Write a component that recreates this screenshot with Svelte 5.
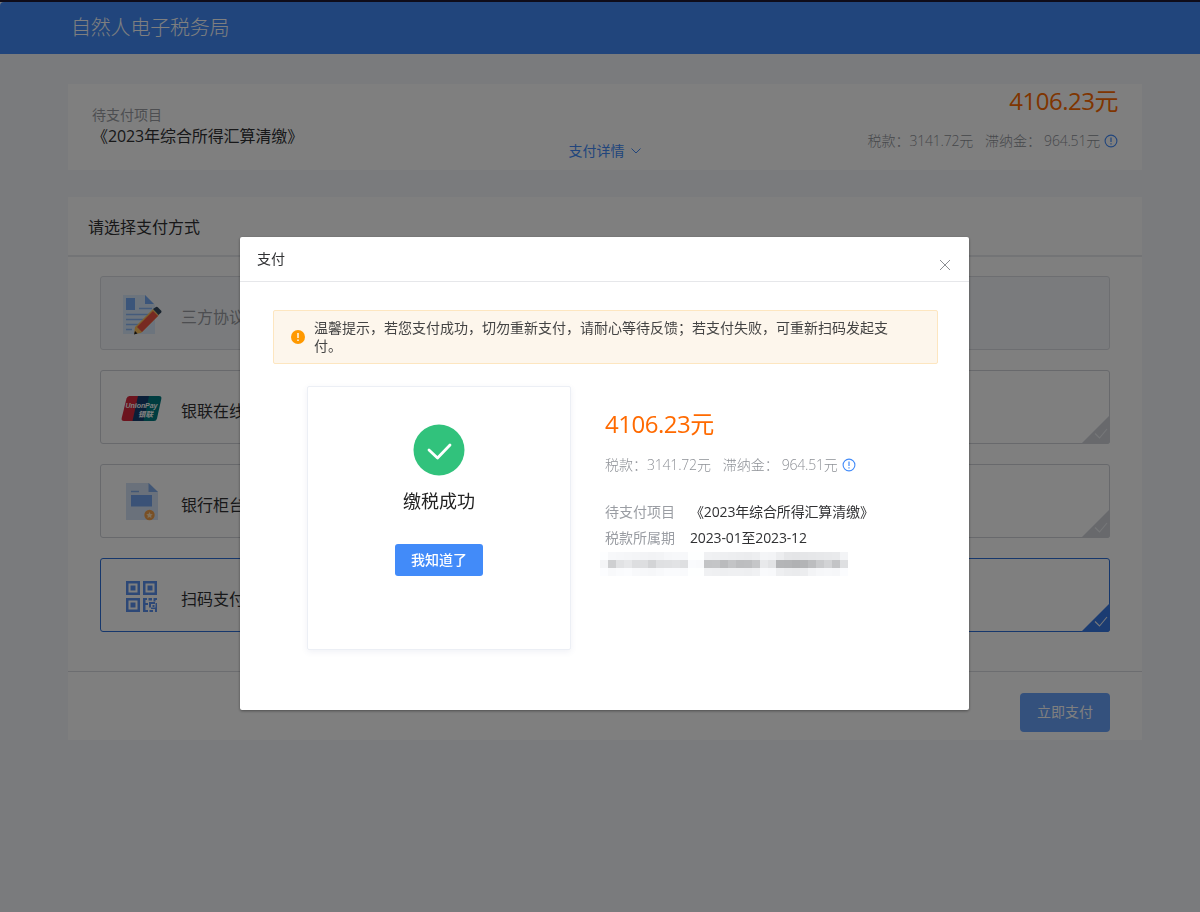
<script>
  const project = '《2023年综合所得汇算清缴》';
  const total = '4106.23元';

  const methods = [
    { id: 'agreement', label: '三方协议', disabled: true },
    { id: 'unionpay', label: '银联在线' },
    { id: 'counter', label: '银行柜台' },
    { id: 'qrcode', label: '扫码支付' },
  ];

  let selected = $state('qrcode');

  // grey level of each 8px block, one list per row
  const mosaic = [
    [253, 247, 246, 245, 244, 243, 242, 243, 246, 247, 247, 254, 254, 240, 239, 238, 237, 236, 235, 237, 244, 243, 236, 229, 228, 229, 230, 231, 232, 233, 243],
    [244, 206, 225, 230, 221, 221, 211, 223, 224, 226, 222, 250, 249, 195, 196, 186, 195, 188, 189, 197, 232, 226, 180, 179, 176, 179, 188, 201, 210, 195, 222],
    [252, 248, 250, 251, 248, 247, 246, 248, 250, 250, 249, 254, 254, 240, 239, 238, 239, 239, 238, 240, 249, 248, 238, 235, 234, 236, 243, 246, 247, 246, 251],
  ];
  const tint = (v) => `rgb(${v}, ${Math.min(255, v + 1)}, ${Math.min(255, v + 3)})`;
</script>

{#snippet info()}
  <svg class="info" viewBox="0 0 14 14" fill="none" stroke="#428bf9">
    <circle cx="7" cy="7" r="5.9" stroke-width="1.1" />
    <path d="M7 3.5v4.6M7 9.2v1.3" stroke-width="1.2" />
  </svg>
{/snippet}

{#snippet fees()}
  <span>税款：</span><span class="num">3141.72元</span>
  <span class="late">滞纳金：</span><span class="num">964.51元</span>
  {@render info()}
{/snippet}

<div class="page">
  <header class="topbar">自然人电子税务局</header>

  <section class="card summary">
    <div class="project">
      <div class="muted">待支付项目</div>
      <div class="project-name">{project}</div>
    </div>
    <div class="detail">
      支付详情
      <svg width="10" height="6" viewBox="0 0 10 6" fill="none" stroke="#428bf9"><path d="M.5.5 5 5 9.5.5" /></svg>
    </div>
    <div class="money">
      <div class="total">{total}</div>
      <div class="fees">{@render fees()}</div>
    </div>
  </section>

  <section class="card chooser">
    <h2>请选择支付方式</h2>
    <div class="methods">
      {#each methods as m}
        <button
          class="method"
          class:disabled={m.disabled}
          class:active={selected === m.id}
          disabled={m.disabled}
          onclick={() => (selected = m.id)}
        >
          {#if m.id === 'agreement'}
            <svg class="icon" viewBox="0 0 42 42">
              <path d="M2 1h22l10 10v29H2z" fill="#d9e8fb" />
              <path d="M24 1v9h9z" fill="#77aaf4" />
              <path d="M5 4h9v12H5z" fill="#77aaf4" />
              <path d="M18 14.5h13M5 20.5h26M5 25.5h20M5 30.5h15M5 35.5h6" stroke="#88b6f6" stroke-width="1.6" />
              <path d="m14 33 18-18 6 6-18 18-7 1z" fill="#ffc35c" />
              <path d="m16 33 16-16 5 5-16 16z" fill="#ef5542" />
              <path d="m32 15 3-2q1-.5 2 .4l3 3q1 1 .2 2L37.5 21z" fill="#34495e" />
              <path d="m14 37-1 3.5 3.5-1z" fill="#222" />
            </svg>
          {:else if m.id === 'unionpay'}
            <svg class="icon" viewBox="0 0 42 42">
              <path d="M8.500 8H19l-5.500 25H3q-3 0-2.300-3L5.500 10.500Q6.200 8 8.500 8z" fill="#d8283c" />
              <path d="M17 8h12l-5.500 25H11.500z" fill="#143f70" />
              <path d="M28 8h10q3 0 2.300 3L36 30.500Q35.400 33 33 33H22.500z" fill="#007b81" />
              <text x="4.500" y="20" class="up-en" textLength="32">UnionPay</text>
              <text x="17" y="28.500" class="up-cn">银联</text>
            </svg>
          {:else if m.id === 'counter'}
            <svg class="icon" viewBox="0 0 42 42">
              <path d="M5 1h23l9 9v28H5z" fill="#d5e3f6" />
              <path d="M27.500 1v9H37z" fill="#83adeb" />
              <path d="M10 9.500h8" stroke="#83adeb" stroke-width="1.500" />
              <path d="M10 13h21v11.500H10z" fill="#75a5ef" />
              <circle cx="28.500" cy="33" r="5.200" fill="#f3a14d" />
              <path d="m28.500 30 1 2 2.200.3-1.600 1.500.4 2.200-2-1-2 1 .4-2.200-1.600-1.500 2.200-.3z" fill="#fee2b9" />
            </svg>
          {:else}
            <svg class="icon qr" viewBox="0 0 42 42" fill="#5b91ef">
              <path fill-rule="evenodd" d="M5 3h14v14H5zM7.500 5.500v9h9v-9zM22 3h14v14H22zM24.500 5.500v9h9v-9zM5 20h14v14H5zM7.500 22.500v9h9v-9z" />
              <path d="M9.500 7.500h5v5h-5zM26.500 7.500h5v5h-5zM9.500 24.500h5v5h-5z" />
              <path d="M22 20h4v2h-1.500v3H27v2h-2.500v5H27v2h-5zM27.500 20H31v2.500h-3.500zM32.500 20H36v2h-1.500v1.500h-2zM28 24h6v2h-4v3.500h-2zM31.500 27h2v2h-2zM34.500 25H36v9h-2v-3h-4v-1.500h4.500zM28.500 32H32v2h-3.500z" />
            </svg>
          {/if}
          <span>{m.label}</span>
          {#if !m.disabled}
            <svg class="corner" viewBox="0 0 29 29">
              <path d="M29 0v29H0z" fill="currentColor" />
              <path class="tick" d="m14 18.500 4.500 4.500 7.500-9" fill="none" stroke-width="1.100" />
            </svg>
          {/if}
        </button>
      {/each}
    </div>
    <footer><button class="pay">立即支付</button></footer>
  </section>
</div>

<div class="mask">
  <div class="dialog">
    <div class="dialog-head">
      <span>支付</span>
      <svg width="12" height="12" viewBox="0 0 12 12" stroke="#8c8f94"><path d="m1 1 10 10M11 1 1 11" /></svg>
    </div>

    <div class="alert">
      <svg width="14" height="14" viewBox="0 0 14 14">
        <circle cx="7" cy="7" r="7" fill="#ff9900" />
        <path d="M7 3v5M7 9.600v1.400" stroke="#fff" stroke-width="1.400" />
      </svg>
      <p>温馨提示，若您支付成功，切勿重新支付，请耐心等待反馈；若支付失败，可重新扫码发起支付。</p>
    </div>

    <div class="dialog-body">
      <div class="result">
        <svg width="52" height="52" viewBox="0 0 52 52" fill="none">
          <circle cx="26" cy="26" r="25.500" fill="#31c27c" />
          <path d="m16 26 8.500 8L37 21" stroke="#fff" stroke-width="2.800" stroke-linecap="round" stroke-linejoin="round" />
        </svg>
        <div class="result-text">缴税成功</div>
        <button class="ok">我知道了</button>
      </div>

      <div class="order">
        <div class="total">{total}</div>
        <div class="fees">{@render fees()}</div>
        <dl>
          <dt>待支付项目</dt><dd>{project}</dd>
          <dt>税款所属期</dt><dd>2023-01至2023-12</dd>
        </dl>
        <div class="mosaic">
          {#each mosaic as row}
            {#each row as v}
              <i style="background: {tint(v)}"></i>
            {/each}
          {/each}
        </div>
      </div>
    </div>
  </div>
</div>

<style>
  :global(body) {
    margin: 0;
    background: #f5f7fa;
    font-family: "Open Sans", "Noto Sans CJK SC", sans-serif;
  }

  .page {
    box-sizing: border-box;
    height: 912px;
    border-top: 2px solid #1e1832;
    background: #f5f7fa;
    overflow: hidden;
  }

  button {
    font-family: inherit;
    padding: 0;
    cursor: pointer;
  }

  .topbar {
    height: 52px;
    padding-left: 71px;
    background: #428bf9;
    border-top-left-radius: 4px;
    color: #fff;
    font-size: 20px;
    font-weight: 300;
    line-height: 52px;
    letter-spacing: -0.2px;
  }

  .card {
    width: 1074px;
    margin-left: 68px;
    background: #fff;
  }

  .summary {
    box-sizing: border-box;
    display: grid;
    grid-template-columns: 1fr auto 1fr;
    height: 86px;
    margin-top: 30px;
    padding: 0 24px;
  }

  .project {
    padding-top: 20px;
  }

  .muted {
    color: #9a9da3;
    font-size: 14px;
    line-height: 22px;
  }

  .project-name {
    color: #303133;
    font-size: 16px;
    line-height: 20px;
    letter-spacing: -0.1px;
  }

  .detail {
    display: flex;
    align-items: center;
    gap: 6px;
    align-self: end;
    color: #428bf9;
    font-size: 14px;
    line-height: 20px;
    padding: 0 1px 9px 0;
  }

  .money {
    display: flex;
    flex-direction: column;
    align-items: flex-end;
  }

  .total {
    color: #ff6a00;
    font-size: 24px;
    line-height: 34px;
    letter-spacing: -0.5px;
    white-space: nowrap;
  }

  .fees {
    display: flex;
    align-items: center;
    color: #8e9197;
    font-size: 14px;
    font-weight: 300;
    line-height: 20px;
    white-space: nowrap;
  }

  .money .fees {
    margin-top: 13px;
  }

  .money .total {
    line-height: 33px;
    padding-bottom: 1px;
  }

  .fees .num {
    letter-spacing: -0.2px;
  }

  .late {
    margin-left: 12px;
    margin-right: 3px;
  }

  .info {
    width: 14px;
    height: 14px;
    margin-left: 4px;
  }

  .chooser {
    height: 543px;
    margin-top: 27px;
  }

  h2 {
    margin: 0;
    padding: 2px 0 0 20px;
    border-bottom: 2px solid #e6e8ec;
    color: #303133;
    font-size: 16px;
    font-weight: 400;
    line-height: 56px;
  }

  .methods {
    box-sizing: border-box;
    display: flex;
    flex-direction: column;
    gap: 20px;
    height: 414px;
    padding: 19px 32px 0;
  }

  .method {
    position: relative;
    box-sizing: border-box;
    display: flex;
    align-items: center;
    gap: 18px;
    height: 74px;
    padding-left: 20px;
    border: 1px solid #d0d3d9;
    border-radius: 3px;
    background: #fff;
    color: #303133;
    font-size: 16px;
  }

  .method span {
    padding-top: 6px;
  }

  .method.disabled {
    background: #f5f7fa;
    border-color: #dadde2;
    color: #9a9da3;
  }

  .method.active {
    border-color: #2d6fd9;
  }

  .icon {
    width: 42px;
    height: 42px;
    margin: 4px 0 0;
  }

  .icon.qr {
    margin-top: 8px;
  }

  .up-en {
    fill: #fff;
    font: italic bold 7px/1 "Liberation Sans", sans-serif;
  }

  .up-cn {
    fill: #fff;
    font: italic bold 7.5px/1 "Noto Sans CJK SC", sans-serif;
  }

  .corner {
    position: absolute;
    right: -1px;
    bottom: -1px;
    width: 29px;
    height: 29px;
    color: #d0d3d9;
    border-bottom-right-radius: 3px;
  }

  .tick {
    stroke: #eceef1;
  }

  .active .corner {
    color: #3678e5;
  }

  footer {
    display: flex;
    justify-content: flex-end;
    padding: 21px 32px 0;
    border-top: 1px solid #d9dbe0;
  }

  .pay {
    width: 90px;
    height: 39px;
    padding-bottom: 3px;
    border: 0;
    border-radius: 4px;
    background: #68a2fa;
    color: #fff;
    font-size: 14px;
  }

  .mask {
    position: fixed;
    inset: 0;
    display: flex;
    justify-content: center;
    align-items: flex-start;
    background: rgba(0, 0, 0, 0.5);
  }

  .dialog {
    box-sizing: border-box;
    width: 729px;
    height: 473px;
    margin: 237px 0 0 9px;
    border-radius: 2px;
    background: #fff;
    box-shadow: 0 1px 3px rgba(0, 0, 0, 0.4);
  }

  .dialog-head {
    box-sizing: border-box;
    display: flex;
    justify-content: space-between;
    height: 45px;
    padding: 12px 18px 0 17px;
    border-bottom: 1px solid #e6e7ea;
    color: #303133;
    font-size: 14px;
    line-height: 20px;
  }

  .dialog-head svg {
    margin-top: 10px;
  }

  .alert {
    box-sizing: border-box;
    display: flex;
    align-items: center;
    gap: 9px;
    width: 665px;
    height: 54px;
    margin: 28px 0 0 33px;
    padding: 0 40px 0 17px;
    border: 1px solid #fde6c0;
    border-radius: 2px;
    background: #fdf6ec;
  }

  .alert svg {
    flex-shrink: 0;
  }

  .alert p {
    margin: 0;
    color: #444;
    font-size: 14px;
    line-height: 18px;
  }

  .dialog-body {
    display: flex;
    gap: 34px;
    padding: 22px 0 0 67px;
  }

  .result {
    box-sizing: border-box;
    display: flex;
    flex-direction: column;
    align-items: center;
    width: 264px;
    height: 264px;
    padding-top: 37px;
    border: 1px solid #eceff5;
    border-radius: 2px;
    box-shadow: 0 2px 6px rgba(60, 80, 140, 0.08);
  }

  .result-text {
    margin-top: 12px;
    color: #222;
    font-size: 18px;
    line-height: 26px;
  }

  .ok {
    width: 88px;
    height: 32px;
    margin-top: 30px;
    padding-bottom: 2px;
    border: 0;
    border-radius: 3px;
    background: #428bf9;
    color: #fff;
    font-size: 14px;
    font-weight: 500;
  }

  .order {
    padding-top: 21px;
  }

  .order .fees {
    margin-top: 14px;
  }

  dl {
    display: grid;
    grid-template-columns: 85px auto;
    margin: 24px 0 0;
    font-size: 14px;
    line-height: 26px;
    white-space: nowrap;
  }

  dt {
    color: #9a9da3;
  }

  dd {
    margin: 0;
    color: #303133;
    letter-spacing: -0.15px;
  }

  .mosaic {
    display: grid;
    grid-template-columns: repeat(31, 8px);
    grid-auto-rows: 8px;
    margin: 1px 0 0 -5px;
  }
</style>
